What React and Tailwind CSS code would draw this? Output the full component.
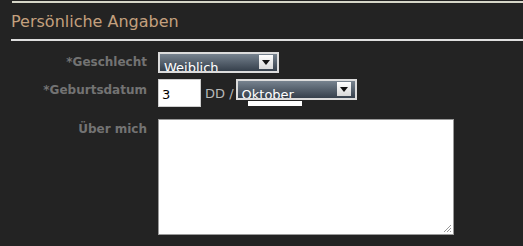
import React from 'react';

const font = { fontFamily: '"DejaVu Sans", Verdana, sans-serif' };

const FakeSelect = ({ value, width }) => (
    <div className={`relative h-[21px] ${width} border-2 border-[#dcdcdc] bg-gradient-to-b from-[#77838f] to-[#36404c] overflow-hidden`}>
        <span className="absolute left-[4px] top-[6px] text-[13px] leading-[16px] text-white">{value}</span>
        <span className="absolute right-[4px] top-[1px] w-[14px] h-[14px] bg-gradient-to-b from-white to-[#d8d8d8] flex items-center justify-center">
            <svg width="8" height="5" viewBox="0 0 8 5">
                <path d="M0 0 L8 0 L4 5 Z" fill="#111" />
            </svg>
        </span>
    </div>
);

const App = () => {
    return (
        <div className="w-[523px] h-[246px] bg-[#232323] overflow-hidden" style={font}>
            <div className="pl-[11px]">
                <div className="mt-[1px] ml-[1px] h-[2px] bg-[#d6d6c8]" />
                <h1 className="mt-[9px] text-[16px] leading-[19px] text-[#c4a07e] font-normal">Persönliche Angaben</h1>
                <div className="mt-[8px] h-[2px] bg-[#dedede]" />
            </div>

            <div className="mt-[11px] flex flex-col">
                <div className="flex items-start">
                    <div className="w-[147px] pt-[2px] text-right text-[12px] leading-[16px] font-bold text-[#737373]">*Geschlecht</div>
                    <div className="ml-[11px]">
                        <FakeSelect value="Weiblich" width="w-[121px]" />
                    </div>
                </div>

                <div className="mt-[6px] flex items-start">
                    <div className="w-[147px] pt-[3px] text-right text-[12px] leading-[16px] font-bold text-[#737373]">*Geburtsdatum</div>
                    <div className="ml-[11px] flex items-start">
                        <div className="w-[43px] h-[28px] bg-white border border-[#cfcfcf] pl-[3px] pt-[7px] text-[13px] leading-[16px] text-black">3</div>
                        <span className="ml-[4px] pt-[7px] text-[13px] leading-[16px] text-[#b8b8b8]">DD /</span>
                        <div className="ml-[2px] relative">
                            <FakeSelect value="Oktober" width="w-[121px]" />
                            <div className="absolute left-[12px] top-[22px] w-[54px] h-[5px] bg-white" />
                        </div>
                    </div>
                </div>

                <div className="mt-[12px] flex items-start">
                    <div className="w-[147px] pt-[2px] text-right text-[12px] leading-[16px] font-bold text-[#737373]">Über mich</div>
                    <div className="ml-[11px] relative w-[296px] h-[116px] bg-white border border-[#9a9a9a]">
                        <svg className="absolute right-[1px] bottom-[1px]" width="10" height="10" viewBox="0 0 10 10">
                            <path d="M9 2 L2 9 M9 5 L5 9 M9 8 L8 9" stroke="#999" strokeWidth="1" />
                        </svg>
                    </div>
                </div>
            </div>
        </div>
    );
};

export default App;
